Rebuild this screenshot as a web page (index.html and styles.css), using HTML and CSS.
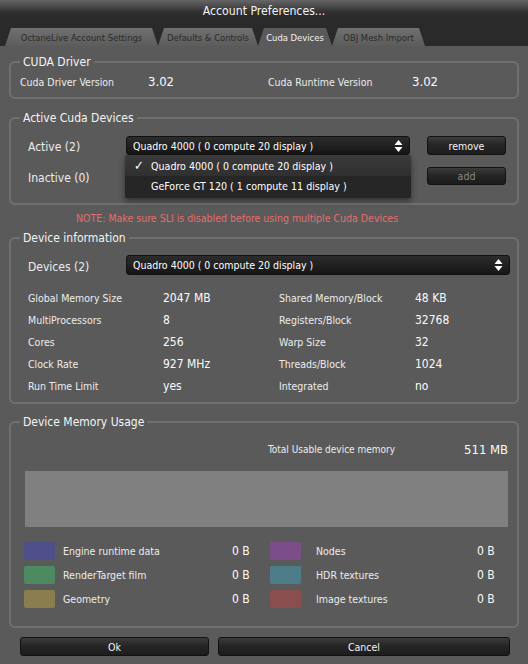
FILE: index.html
```html
<!DOCTYPE html>
<html lang="en">
<head>
    <meta charset="UTF-8">
    <title>Account Preferences...</title>
    <link rel="stylesheet" href="styles.css">
</head>
<body>
<div class="window">
    <header class="titlebar">Account Preferences...</header>

    <nav class="tabs">
        <span class="tab tab-account">OctaneLive Account Settings</span>
        <span class="tab tab-defaults">Defaults &amp; Controls</span>
        <span class="tab tab-cuda active">Cuda Devices</span>
        <span class="tab tab-obj">OBJ Mesh Import</span>
    </nav>

    <main class="panel">
        <!-- CUDA driver -->
        <fieldset class="group group-driver">
            <legend>CUDA Driver</legend>
            <div class="driver-row">
                <span class="label">Cuda Driver Version</span>
                <span class="value big">3.02</span>
                <span class="label">Cuda Runtime Version</span>
                <span class="value big">3.02</span>
            </div>
        </fieldset>

        <!-- Active devices -->
        <fieldset class="group group-active">
            <legend>Active Cuda Devices</legend>
            <div class="device-rows">
                <span class="row-label">Active (2)</span>
                <div class="select-wrap">
                    <div class="select">
                        <span>Quadro 4000 ( 0 compute 20 display )</span>
                        <svg class="updown" width="9" height="14" viewBox="0 0 9 14"><path d="M4.5 1L8.5 6H0.5Z M0.5 8H8.5L4.5 13Z" fill="#fff"/></svg>
                    </div>
                    <ul class="popup">
                        <li class="picked"><span class="check">&#10003;</span>Quadro 4000 ( 0 compute 20 display )</li>
                        <li><span class="check"></span>GeForce GT 120 ( 1 compute 11 display )</li>
                    </ul>
                </div>
                <button class="btn small-btn">remove</button>

                <span class="row-label">Inactive (0)</span>
                <span></span>
                <button class="btn small-btn disabled">add</button>
            </div>
        </fieldset>

        <p class="note">NOTE: Make sure SLI is disabled before using multiple Cuda Devices</p>

        <!-- Device information -->
        <fieldset class="group group-info">
            <legend>Device information</legend>
            <div class="devices-row">
                <span class="row-label">Devices (2)</span>
                <div class="select wide">
                    <span>Quadro 4000 ( 0 compute 20 display )</span>
                    <svg class="updown" width="9" height="14" viewBox="0 0 9 14"><path d="M4.5 1L8.5 6H0.5Z M0.5 8H8.5L4.5 13Z" fill="#fff"/></svg>
                </div>
            </div>
            <div class="info-grid">
                <span class="label">Global Memory Size</span><span class="value">2047 MB</span>
                <span class="label">Shared Memory/Block</span><span class="value">48 KB</span>

                <span class="label">MultiProcessors</span><span class="value">8</span>
                <span class="label">Registers/Block</span><span class="value">32768</span>

                <span class="label">Cores</span><span class="value">256</span>
                <span class="label">Warp Size</span><span class="value">32</span>

                <span class="label">Clock Rate</span><span class="value">927 MHz</span>
                <span class="label">Threads/Block</span><span class="value">1024</span>

                <span class="label">Run Time Limit</span><span class="value">yes</span>
                <span class="label">Integrated</span><span class="value">no</span>
            </div>
        </fieldset>

        <!-- Memory usage -->
        <fieldset class="group group-memory">
            <legend>Device Memory Usage</legend>
            <div class="total-row">
                <span class="label total-label">Total Usable device memory</span>
                <span class="value big">511 MB</span>
            </div>
            <div class="mem-bar"></div>
            <div class="mem-legend">
                <span class="swatch sw-engine"></span><span class="label">Engine runtime data</span><span class="value">0 B</span>
                <span class="swatch sw-nodes"></span><span class="label">Nodes</span><span class="value">0 B</span>

                <span class="swatch sw-film"></span><span class="label">RenderTarget film</span><span class="value">0 B</span>
                <span class="swatch sw-hdr"></span><span class="label">HDR textures</span><span class="value">0 B</span>

                <span class="swatch sw-geo"></span><span class="label">Geometry</span><span class="value">0 B</span>
                <span class="swatch sw-image"></span><span class="label">Image textures</span><span class="value">0 B</span>
            </div>
        </fieldset>

        <div class="actions">
            <button class="btn">Ok</button>
            <button class="btn">Cancel</button>
        </div>
    </main>
</div>
</body>
</html>
```

FILE: styles.css
```css
html, body {
    margin: 0;
    padding: 0;
    background-color: #5a5a5a;
}
body {
    font-family: "DejaVu Sans Condensed", "DejaVu Sans", sans-serif;
    font-size: 10.5px;
    color: #ececec;
}
.window {
    width: 528px;
    height: 664px;
    overflow: hidden;
}

/* Title + tabs */
.titlebar {
    height: 28px;
    line-height: 22px;
    text-align: center;
    font-size: 12.2px;
    color: #f4f4f4;
    background: linear-gradient(#666 0, #474747 7px, #303030 12px, #2a2a2a 16px);
}
.tabs {
    display: flex;
    height: 18px;
    padding-left: 5px;
    background-color: #2a2a2a;
}
.tab {
    height: 18px;
    line-height: 19px;
    text-align: center;
    font-size: 9.4px;
    color: #2b2b2b;
    background: linear-gradient(#707070, #5c5c5c);
    clip-path: polygon(0 100%, 6px 0, calc(100% - 6px) 0, 100% 100%);
    white-space: nowrap;
}
.tab.active {
    color: #f2f2f2;
    background: #5a5a5a;
}
.tab-account { width: 153px; }
.tab-defaults { width: 100px; }
.tab-cuda { width: 74px; }
.tab-obj { width: 93px; }

/* Content panel */
.group {
    margin: 0 9px;
    padding: 0 9px;
    min-inline-size: 0;
    border: 2px solid #707070;
    border-radius: 6px;
}
.group legend {
    padding: 0 3px;
    font-size: 12px;
    line-height: 16px;
    color: #f4f4f4;
}
.label { white-space: nowrap; }
.value { font-size: 12px; color: #fafafa; white-space: nowrap; }
.value.big { font-size: 13px; }

.group-driver { margin-top: 8px; padding-top: 4px; padding-bottom: 7px; }
.driver-row {
    display: grid;
    grid-template-columns: 128px 120px 144px 1fr;
    line-height: 16px;
}

.group-active { margin-top: 11px; padding-top: 10px; padding-bottom: 18px; }
.device-rows {
    display: grid;
    grid-template-columns: 81px 284px 79px;
    grid-template-rows: 19px 18px;
    column-gap: 17px;
    row-gap: 12px;
    padding-left: 8px;
    align-items: center;
}
.row-label { font-size: 12px; padding-top: 3px; white-space: nowrap; }

.select-wrap { position: relative; }
.select {
    display: flex;
    align-items: center;
    justify-content: space-between;
    height: 19px;
    box-sizing: border-box;
    padding: 0 6px;
    font-size: 10.5px;
    color: #fff;
    border: 1px solid #111;
    border-radius: 3px;
    background: linear-gradient(#2c2c2c, #161616);
}
.select.wide { height: 20px; margin-right: -2px; }
.popup {
    position: absolute;
    left: -1px;
    top: 19px;
    width: 286px;
    margin: 0;
    padding: 0;
    list-style: none;
    font-size: 10.6px;
    color: #fff;
    background-color: #262626;
    box-shadow: 0 3px 6px rgba(0,0,0,0.45);
    z-index: 2;
}
.popup li {
    height: 21px;
    line-height: 21px;
    padding-left: 9px;
    white-space: nowrap;
}
.popup li.picked { background: linear-gradient(#3a3a3a, #303030); }
.popup li:last-child { height: 22px; }
.check {
    display: inline-block;
    width: 17px;
    font-size: 13px;
}

.btn {
    font-family: inherit;
    font-size: 10.5px;
    color: #f4f4f4;
    height: 19px;
    padding: 0;
    border: 1px solid #121212;
    border-radius: 3px;
    background: linear-gradient(#3c3c3c, #262626 45%, #1c1c1c);
}
.small-btn { width: 79px; }
.btn.disabled { color: #8a8a8a; height: 18px; }

.note {
    margin: 5px 0 0;
    padding-left: 76px;
    line-height: 16px;
    color: #e56d6d;
}

.group-info { margin-top: 4px; padding-top: 9px; padding-bottom: 5px; }
.devices-row {
    display: grid;
    grid-template-columns: 98px 1fr;
    padding-left: 8px;
    align-items: center;
}
.devices-row .row-label { padding-top: 4px; }
.info-grid {
    display: grid;
    grid-template-columns: 135px 116px 136px 1fr;
    grid-auto-rows: 22px;
    align-items: center;
    margin-top: 12px;
    padding-left: 8px;
}

.group-memory { margin-top: 10px; padding-top: 12px; padding-bottom: 15px; }
.total-row {
    display: grid;
    grid-template-columns: 196px auto;
    padding-left: 248px;
    line-height: 16px;
}
.total-label { font-size: 10px; }
.mem-bar {
    height: 56px;
    margin: 13px 0 0 5px;
    background-color: #808080;
}
.mem-legend {
    display: grid;
    grid-template-columns: 39px 169px 38px 46px 161px auto;
    grid-auto-rows: 24px;
    align-items: center;
    margin-top: 12px;
    padding-left: 4px;
}
.mem-legend .label { font-size: 10.5px; }
.swatch {
    width: 31px;
    height: 18px;
    border-radius: 2px;
}
.sw-engine { background-color: #4f4f8b; }
.sw-film { background-color: #4e8a5f; }
.sw-geo { background-color: #8a7d4e; }
.sw-nodes { background-color: #7b4e8a; }
.sw-hdr { background-color: #4e7d8a; }
.sw-image { background-color: #8a4e4e; }

.actions {
    display: grid;
    grid-template-columns: 189px 292px;
    column-gap: 9px;
    margin-top: 9px;
    padding-left: 20px;
}
```
